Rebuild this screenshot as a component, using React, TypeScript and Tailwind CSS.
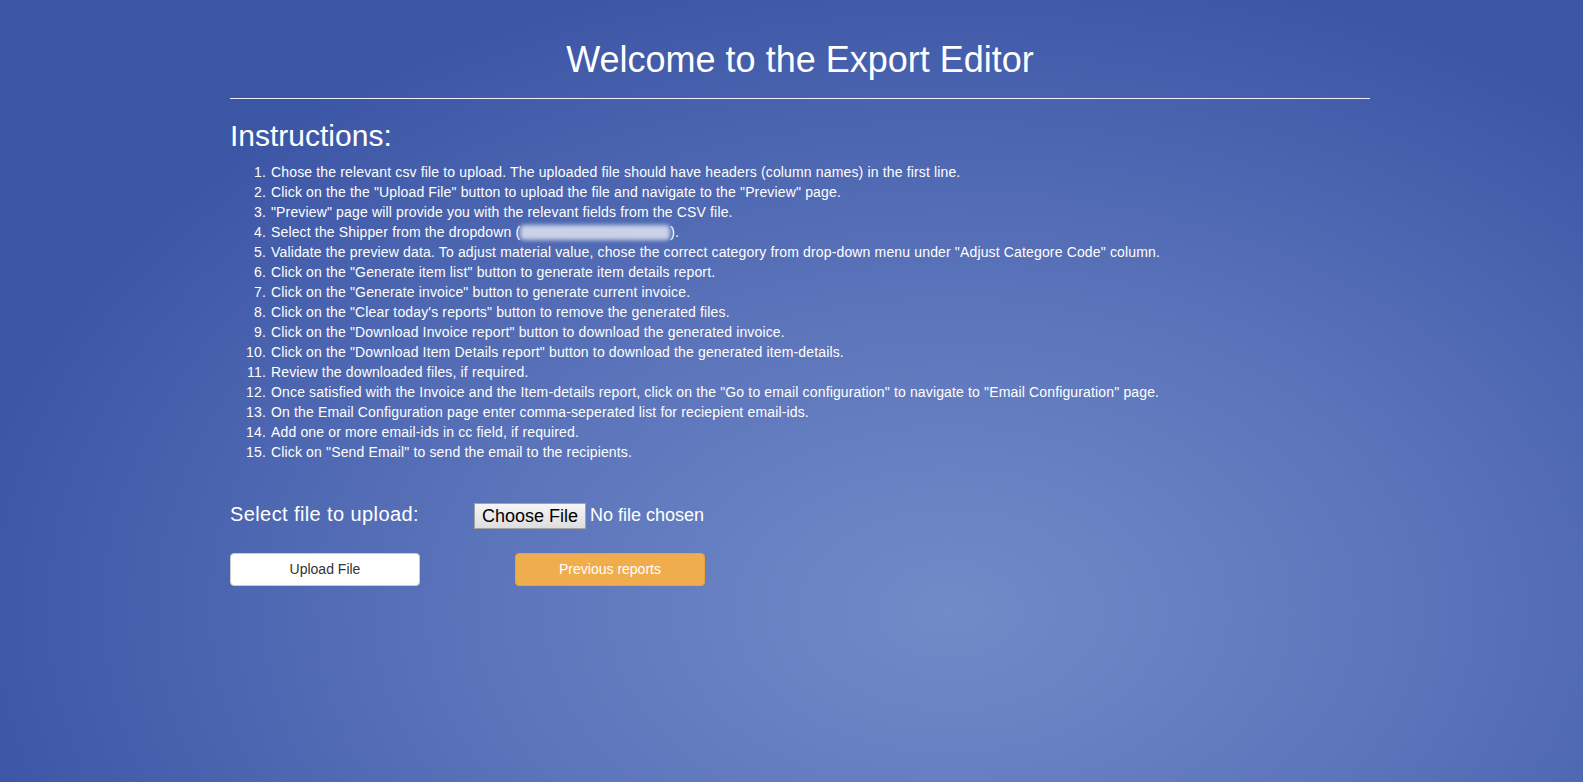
const steps: React.ReactNode[] = [
  'Chose the relevant csv file to upload. The uploaded file should have headers (column names) in the first line.',
  'Click on the the "Upload File" button to upload the file and navigate to the "Preview" page.',
  '"Preview" page will provide you with the relevant fields from the CSV file.',
  <>
    Select the Shipper from the dropdown (
    <span className="inline-block h-[15px] w-[150px] translate-y-[3px] rounded-sm bg-white/70 blur-[2px]" />
    ).
  </>,
  'Validate the preview data. To adjust material value, chose the correct category from drop-down menu under "Adjust Categore Code" column.',
  'Click on the "Generate item list" button to generate item details report.',
  'Click on the "Generate invoice" button to generate current invoice.',
  'Click on the "Clear today\'s reports" button to remove the generated files.',
  'Click on the "Download Invoice report" button to download the generated invoice.',
  'Click on the "Download Item Details report" button to download the generated item-details.',
  'Review the downloaded files, if required.',
  'Once satisfied with the Invoice and the Item-details report, click on the "Go to email configuration" to navigate to "Email Configuration" page.',
  'On the Email Configuration page enter comma-seperated list for reciepient email-ids.',
  'Add one or more email-ids in cc field, if required.',
  'Click on "Send Email" to send the email to the recipients.',
]

export default function App() {
  return (
    <div className="h-[782px] w-full overflow-hidden bg-[#3b55a5] bg-[radial-gradient(ellipse_1000px_660px_at_950px_610px,#718bc8_0%,#5f78bd_40%,#3c56a6_100%)] font-['Liberation_Sans',Arial,sans-serif] text-white">
      <div className="ml-[230px] w-[1140px] pt-[40px]">
        <h1 className="text-center text-[36px] leading-[40px]">Welcome to the Export Editor</h1>
        <hr className="mt-[18px] h-px border-0 bg-[#eef0f7]" />

        <h2 className="mt-[20px] text-[30px] leading-[33px]">Instructions:</h2>
        <ol className="mt-[10px] list-decimal pl-[40px] text-[14px] leading-[20px] tracking-[0.15px]">
          {steps.map((s, i) => (
            <li key={i} className="pl-[1px]">
              {s}
            </li>
          ))}
        </ol>

        <div className="mt-[38px] flex h-[30px] items-start">
          <label className="w-[244px] text-[20px] leading-[28px] tracking-[0.4px]">Select file to upload:</label>
          <div className="mt-[2px] flex items-center">
            <button
              type="button"
              className="h-[26px] border border-[#a3a3a3] bg-gradient-to-b from-[#f6f6f6] to-[#dedede] px-[7px] text-[18px] leading-[22px] text-black"
            >
              Choose File
            </button>
            <span className="ml-[4px] text-[18px]">No file chosen</span>
          </div>
        </div>

        <div className="mt-[23px] flex gap-[95px]">
          <button
            type="button"
            className="h-[33px] w-[190px] rounded-[4px] border border-[#cccccc] bg-white text-[14px] text-[#333333]"
          >
            Upload File
          </button>
          <button
            type="button"
            className="h-[33px] w-[190px] rounded-[4px] border border-[#eea236] bg-[#f0ad4e] text-[14px] text-white"
          >
            Previous reports
          </button>
        </div>
      </div>
    </div>
  )
}
